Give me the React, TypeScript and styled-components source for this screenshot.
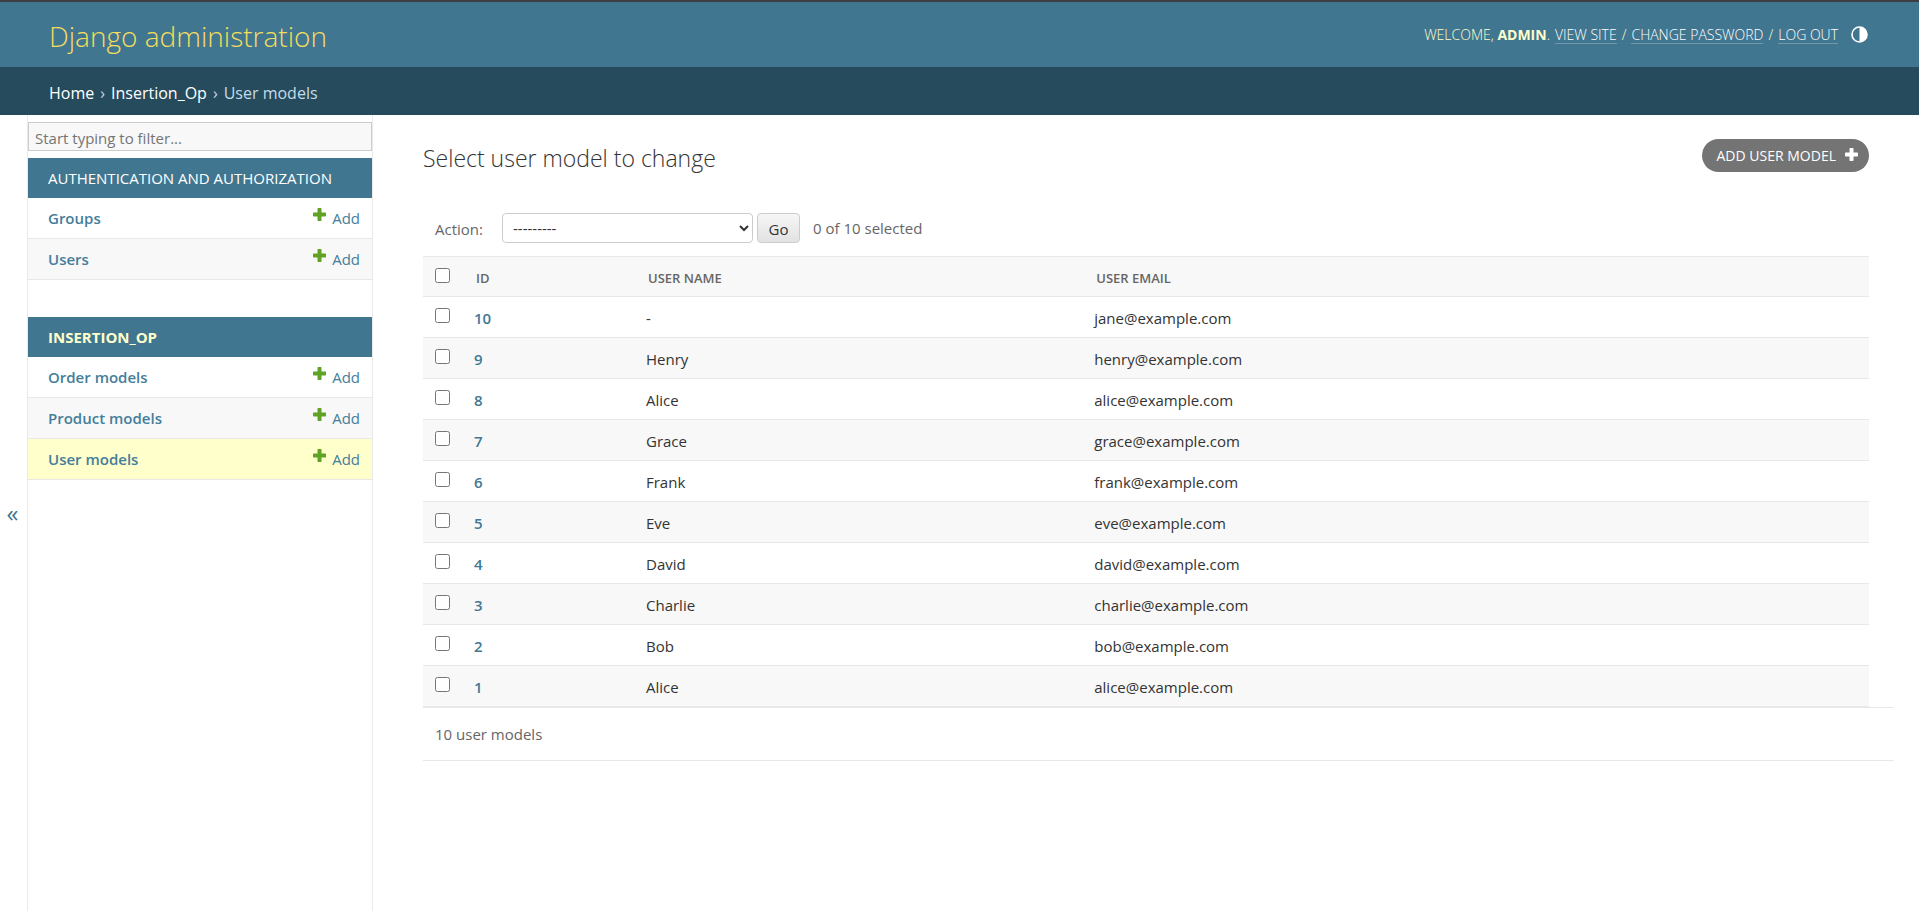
import React from "react";
import styled, { createGlobalStyle } from "styled-components";

const GlobalStyle = createGlobalStyle`
  *, *::before, *::after { box-sizing: border-box; }
  html, body, #root { height: 100%; }
  body {
    margin: 0;
    background: #fff;
    color: #333;
    font-family: "Open Sans", "Noto Sans", sans-serif;
    font-size: 15px;
    line-height: 20px;
  }
  a { text-decoration: none; }
  input, select, button { font: inherit; margin: 0; }
`;

const Page = styled.div`
  display: flex;
  flex-direction: column;
  min-height: 100%;
  border-top: 2px solid #3c3f42;
`;

const Header = styled.header`
  display: flex;
  align-items: center;
  justify-content: space-between;
  height: 65px;
  padding: 0 51px 0 49px;
  background: #417690;
  color: #ffc;
`;

const Brand = styled.a`
  color: #f5dd5d;
  font-size: 28px;
  line-height: 36px;
  font-weight: 300;
  padding-top: 2px;
`;

const UserTools = styled.div`
  display: flex;
  align-items: center;
  gap: 5px;
  font-size: 14px;
  line-height: 17px;
  font-weight: 300;
  text-transform: uppercase;
  strong { font-weight: 700; }
`;

const ToolLink = styled.a`
  color: #fff;
  border-bottom: 1px solid rgba(255, 255, 255, 0.25);
`;

const ThemeButton = styled.button`
  display: flex;
  margin-left: 8px;
  padding: 0;
  border: 0;
  background: none;
  color: #fff;
`;

const Breadcrumbs = styled.nav`
  display: flex;
  align-items: center;
  gap: 6px;
  height: 48px;
  padding: 3px 49px 0;
  background: #264b5d;
  color: #c4dce8;
  font-size: 16px;
  a { color: #fff; }
`;

const Main = styled.div`
  display: flex;
  flex: 1;
`;

const SidebarToggle = styled.button`
  flex: 0 0 28px;
  padding: 0 2px 0 0;
  border: 0;
  border-right: 1px solid #eaeaea;
  background: #fff;
  color: #417690;
  font-size: 24px;
`;

const Sidebar = styled.nav`
  flex: 0 0 345px;
  padding-top: 7px;
  border-right: 1px solid #eaeaea;
`;

const Filter = styled.input`
  display: block;
  width: 100%;
  height: 29px;
  margin-bottom: 7px;
  padding: 2px 6px 0;
  border: 1px solid #ccc;
  border-radius: 0;
  background: #f8f8f8;
  color: #333;
  &::placeholder { color: #757575; }
`;

const Module = styled.section`
  margin-bottom: 37px;
`;

const ModuleTitle = styled.h2<{ $current?: boolean }>`
  display: flex;
  align-items: center;
  height: 40px;
  margin: 0;
  padding: 0 20px;
  background: #417690;
  font-size: 15px;
  font-weight: ${(p) => (p.$current ? 700 : 400)};
  text-transform: uppercase;
  a { color: ${(p) => (p.$current ? "#ffc" : "#fff")}; }
`;

const ModelList = styled.ul`
  margin: 0;
  padding: 0;
  list-style: none;
`;

const ModelRow = styled.li<{ $current?: boolean }>`
  display: flex;
  align-items: center;
  justify-content: space-between;
  height: 41px;
  padding: 0 12px 0 20px;
  border-bottom: 1px solid #e8e8e8;
  background: ${(p) => (p.$current ? "#ffc" : "#fff")};
  &:nth-child(even) { background: #f8f8f8; }
  a { color: #447e9b; }
`;

const ModelLink = styled.a`
  font-weight: 600;
`;

const AddLink = styled.a`
  display: flex;
  gap: 6px;
`;

const Content = styled.main`
  flex: 1;
  min-width: 0;
  padding: 24px 25px 25px 50px;
`;

const TitleBar = styled.div`
  display: flex;
  align-items: flex-start;
  justify-content: space-between;
  margin-right: 25px;
`;

const Title = styled.h1`
  margin: 5px 0 0;
  font-size: 23px;
  line-height: 28px;
  font-weight: 300;
`;

const AddButton = styled.a`
  display: flex;
  align-items: center;
  gap: 9px;
  height: 33px;
  padding: 0 11px 0 15px;
  border-radius: 17px;
  background: #747474;
  color: #fff;
  font-size: 14px;
  text-transform: uppercase;
  svg { margin-bottom: 3px; }
`;

const Changelist = styled.form`
  margin: 41px 0 0;
`;

const Actions = styled.div`
  display: flex;
  align-items: center;
  height: 30px;
  margin: 0 25px 13px 0;
  padding-left: 12px;
  color: #666;
`;

const ActionLabel = styled.label`
  width: 67px;
  padding-top: 2px;
`;

const ActionSelect = styled.select`
  width: 251px;
  height: 30px;
  padding: 0 6px;
  border: 1px solid #ccc;
  border-radius: 4px;
  background: #fff;
  color: #333;
`;

const GoButton = styled.button`
  width: 43px;
  height: 30px;
  margin: 0 13px 0 4px;
  padding: 2px 0 0;
  border: 1px solid #ccc;
  border-radius: 4px;
  background: linear-gradient(#f6f6f6, #e2e2e2);
  color: #333;
`;

const TableWrap = styled.div`
  margin-right: 25px;
`;

const Table = styled.table`
  width: 100%;
  table-layout: fixed;
  border-collapse: separate;
  border-spacing: 0;
  border-top: 1px solid #e8e8e8;
  th, td {
    height: 41px;
    padding: 2px 10px 0;
    border-bottom: 1px solid #e8e8e8;
    text-align: left;
    vertical-align: middle;
  }
  thead th {
    height: 40px;
    padding-left: 12px;
    background: #f8f8f8;
    color: #666;
    font-size: 13px;
    font-weight: 600;
    text-transform: uppercase;
  }
  tbody tr:nth-child(even) { background: #f8f8f8; }
  tbody th { font-weight: 600; }
  tbody th a { color: #417893; }
`;

const SelectCol = styled.col` width: 41px; `;
const IdCol = styled.col` width: 172px; `;
const NameCol = styled.col` width: 31%; `;

const RowCheck = styled.input`
  display: block;
  width: 15px;
  height: 15px;
  margin: 0 0 5px 2px;
  thead & { margin-left: 0; }
`;

const Paginator = styled.p`
  display: flex;
  align-items: center;
  height: 54px;
  margin: 0;
  padding: 0 12px;
  border: solid #e8e8e8;
  border-width: 1px 0;
  color: #666;
`;

const Plus = ({ color }: { color: string }) => (
  <svg width="13" height="13" viewBox="0 0 13 13" aria-hidden="true">
    <path
      d="M5.2 0h2.6q.7 0 .7.7v3.8h3.8q.7 0 .7.7v2.6q0 .7-.7.7H8.500v3.800q0 .7-.7.7H5.200q-.7 0-.7-.7V8.500H.7Q0 8.500 0 7.800V5.200q0-.7.7-.7h3.800V.7q0-.7.7-.7z"
      fill={color}
    />
  </svg>
);

const HalfCircle = () => (
  <svg width="17" height="17" viewBox="0 0 17 17" aria-hidden="true">
    <circle cx="8.500" cy="8.500" r="7.500" fill="none" stroke="currentColor" strokeWidth="1.600" />
    <path d="M8.500 1a7.500 7.500 0 0 1 0 15z" fill="currentColor" />
  </svg>
);

const apps = [
  { name: "Authentication and Authorization", current: false, models: ["Groups", "Users"] },
  { name: "Insertion_Op", current: true, models: ["Order models", "Product models", "User models"] },
];

const users = [
  { id: 10, name: "-", email: "jane@example.com" },
  { id: 9, name: "Henry", email: "henry@example.com" },
  { id: 8, name: "Alice", email: "alice@example.com" },
  { id: 7, name: "Grace", email: "grace@example.com" },
  { id: 6, name: "Frank", email: "frank@example.com" },
  { id: 5, name: "Eve", email: "eve@example.com" },
  { id: 4, name: "David", email: "david@example.com" },
  { id: 3, name: "Charlie", email: "charlie@example.com" },
  { id: 2, name: "Bob", email: "bob@example.com" },
  { id: 1, name: "Alice", email: "alice@example.com" },
];

export default function App() {
  return (
    <Page>
      <GlobalStyle />
      <Header>
        <Brand href="#">Django administration</Brand>
        <UserTools>
          <span>Welcome, <strong>admin</strong>.</span>
          <ToolLink href="#">View site</ToolLink>
          <span>/</span>
          <ToolLink href="#">Change password</ToolLink>
          <span>/</span>
          <ToolLink href="#">Log out</ToolLink>
          <ThemeButton type="button" aria-label="Toggle theme">
            <HalfCircle />
          </ThemeButton>
        </UserTools>
      </Header>
      <Breadcrumbs aria-label="Breadcrumbs">
        <a href="#">Home</a>
        <span>›</span>
        <a href="#">Insertion_Op</a>
        <span>›</span>
        <span>User models</span>
      </Breadcrumbs>
      <Main>
        <SidebarToggle type="button" aria-label="Toggle navigation">«</SidebarToggle>
        <Sidebar aria-label="Sidebar">
          <Filter type="search" placeholder="Start typing to filter..." aria-label="Filter navigation items" />
          {apps.map((app) => (
            <Module key={app.name}>
              <ModuleTitle $current={app.current}>
                <a href="#">{app.name}</a>
              </ModuleTitle>
              <ModelList>
                {app.models.map((model) => (
                  <ModelRow key={model} $current={model === "User models"}>
                    <ModelLink href="#">{model}</ModelLink>
                    <AddLink href="#">
                      <Plus color="#5fa225" />
                      Add
                    </AddLink>
                  </ModelRow>
                ))}
              </ModelList>
            </Module>
          ))}
        </Sidebar>
        <Content>
          <TitleBar>
            <Title>Select user model to change</Title>
            <AddButton href="#">
              Add user model
              <Plus color="#fff" />
            </AddButton>
          </TitleBar>
          <Changelist>
            <Actions>
              <ActionLabel htmlFor="action">Action:</ActionLabel>
              <ActionSelect id="action">
                <option>---------</option>
              </ActionSelect>
              <GoButton type="button">Go</GoButton>
              <span>0 of 10 selected</span>
            </Actions>
            <TableWrap>
              <Table>
                <colgroup>
                  <SelectCol />
                  <IdCol />
                  <NameCol />
                  <col />
                </colgroup>
                <thead>
                  <tr>
                    <th scope="col">
                      <RowCheck type="checkbox" aria-label="Select all objects on this page" />
                    </th>
                    <th scope="col">ID</th>
                    <th scope="col">User name</th>
                    <th scope="col">User email</th>
                  </tr>
                </thead>
                <tbody>
                  {users.map((user) => (
                    <tr key={user.id}>
                      <td>
                        <RowCheck type="checkbox" aria-label={`Select user model ${user.id}`} />
                      </td>
                      <th scope="row">
                        <a href="#">{user.id}</a>
                      </th>
                      <td>{user.name}</td>
                      <td>{user.email}</td>
                    </tr>
                  ))}
                </tbody>
              </Table>
            </TableWrap>
            <Paginator>10 user models</Paginator>
          </Changelist>
        </Content>
      </Main>
    </Page>
  );
}
